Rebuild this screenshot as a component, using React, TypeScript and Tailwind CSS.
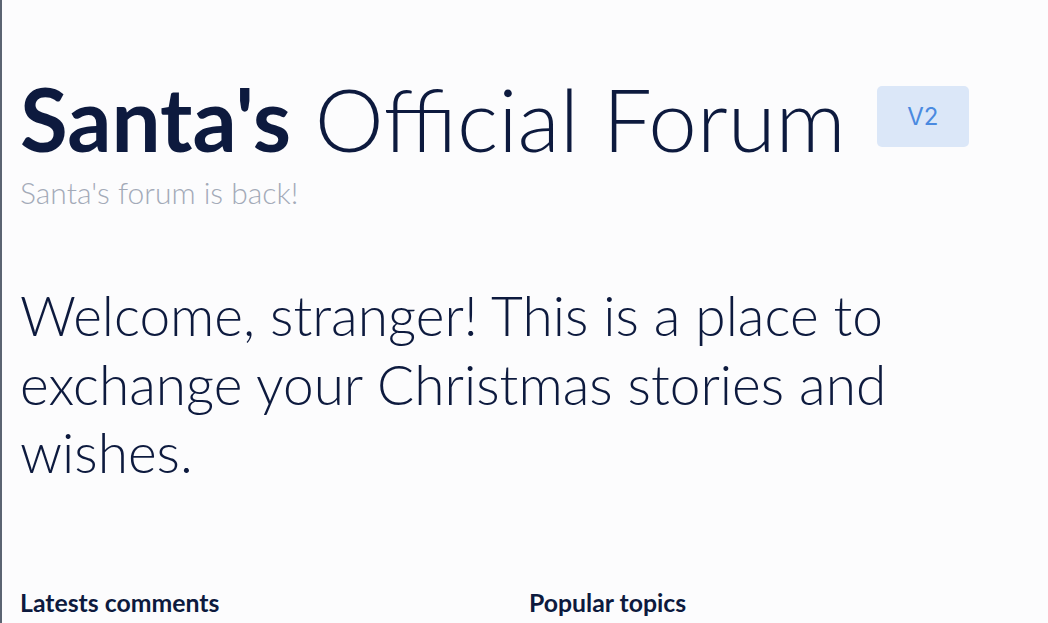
import React from "react";

export default function App() {
  return (
    <div
      className="min-h-[623px] w-full bg-[#fcfcfd] border-l-2 border-[#5b6472] text-[#0d1a3e]"
      style={{ fontFamily: "Lato, 'Noto Sans', sans-serif" }}
    >
      <div className="pl-[18px] pr-[10px] pt-[67px]">
        <div className="flex items-start">
          <h1 className="text-[87.2px] leading-[104px] font-light whitespace-nowrap">
            <span className="font-bold">Santa's</span> Official Forum
          </h1>
          <span
            className="ml-[31px] mt-[19px] flex h-[61px] w-[92px] items-center justify-center rounded-[5px] bg-[#dbe7f8] text-[24px] text-[#4a8ae0]"
            style={{ fontFamily: "Inter, 'Noto Sans', sans-serif" }}
          >
            V2
          </span>
        </div>
        <p className="mt-[3px] text-[30px] leading-[36px] font-light text-[#a3aab8]">
          Santa's forum is back!
        </p>
        <p className="mt-[71px] text-[55px] leading-[68.5px] font-light max-w-[900px]">
          Welcome, stranger! This is a place to exchange your Christmas stories and wishes.
        </p>
        <div className="mt-[101px] grid grid-cols-2">
          <h2 className="text-[24.8px] leading-[30px] font-bold">Latests comments</h2>
          <h2 className="text-[24.8px] leading-[30px] font-bold">Popular topics</h2>
        </div>
      </div>
    </div>
  );
}
